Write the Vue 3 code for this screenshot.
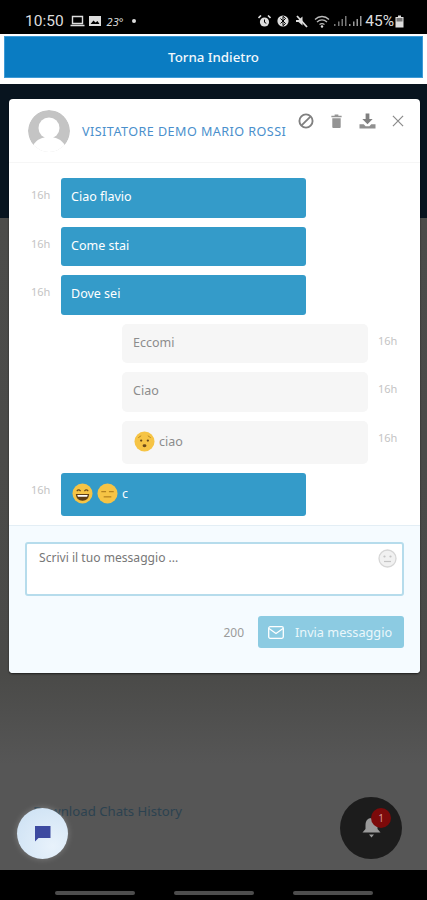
<template>
  <div class="phone">
    <div class="status-bar">
      <div class="status-left">
        <span class="clock">10:50</span>
        <svg width="15" height="12" viewBox="0 0 15 12"><path d="M2.500 1.500h10v7h-10zM0.500 10.500h14" fill="none" stroke="#ddd" stroke-width="1.400"/></svg>
        <svg width="14" height="12" viewBox="0 0 13 12"><path d="M0.500 1h12v10h-12z" fill="#ddd"/><path d="M2 9l3-3.500 2 2 2-1.500 2 3z" fill="#000"/></svg>
        <span class="temp">23°</span>
        <span class="dot"></span>
      </div>
      <div class="status-right">
        <svg width="13" height="13" viewBox="0 0 13 13"><circle cx="6.500" cy="7" r="4.600" fill="#ddd"/><path d="M0.500 3l2.500-2.500M12.500 3L10 0.500" stroke="#ddd" stroke-width="1.600"/><path d="M6.500 4.500v2.800l1.800 1" fill="none" stroke="#000" stroke-width="1"/></svg>
        <svg width="12" height="14" viewBox="0 0 12 14"><circle cx="6" cy="7" r="5.600" fill="#ddd"/><path d="M3.500 4.500l5 5-2.500 2.200v-9.400l2.500 2.200-5 5" fill="none" stroke="#000" stroke-width="1"/></svg>
        <svg width="13" height="13" viewBox="0 0 13 13"><path d="M1 5h2.500l4-3.500v9L3.500 7H1z" fill="#ddd"/><path d="M2 1l10 11" stroke="#ddd" stroke-width="1.800"/></svg>
        <div class="signal-group">
          <svg width="17" height="13" viewBox="0 0 17 13"><path d="M1 4.500c4-4 10-4 14 0M3 7c3-2.700 7-2.700 10 0M5.500 9.500c1.600-1.200 3.400-1.200 5 0" fill="none" stroke="#bbb" stroke-width="1.300"/><circle cx="8" cy="11.500" r="1.200" fill="#ddd"/></svg>
          <svg width="14" height="12" viewBox="0 0 14 12"><path d="M1 9h1.500v2H1zM5 6.500h1.500V11H5zM8.500 4h1.500v7H8.500zM12 1h1.500v10H12z" fill="#777"/></svg>
          <svg width="14" height="12" viewBox="0 0 14 12"><path d="M1 9h1.500v2H1zM5 6.500h1.500V11H5zM8.500 4h1.500v7H8.500zM12 1h1.500v10H12z" fill="#999"/></svg>
        </div>
        <div class="battery-group">
          <span class="battery-text">45%</span>
          <svg width="9" height="13" viewBox="0 0 9 13"><path d="M3 0.500h3v1.500h2.500v10.500h-8V2H3z" fill="#ddd"/><path d="M1.500 3h6v3.500h-6z" fill="#777"/></svg>
        </div>
      </div>
    </div>

    <div class="top-band">
      <button class="back-button">Torna Indietro</button>
    </div>

    <div class="backdrop">
      <div class="modal">
        <div class="modal-header">
          <div class="avatar">
            <svg width="42" height="42" viewBox="0 0 42 42"><circle cx="21" cy="21" r="21" fill="#c4c4c4"/><circle cx="21" cy="18" r="10.500" fill="#fff"/><path d="M5 36c3-7 10-9 16-9s13 2 16 9a21 21 0 0 1-32 0z" fill="#fff"/></svg>
          </div>
          <span class="visitor-name">VISITATORE DEMO MARIO ROSSI</span>
          <div class="header-actions">
            <svg width="16" height="16" viewBox="0 0 17 17"><circle cx="8.500" cy="8.500" r="7" fill="none" stroke="#808080" stroke-width="2"/><path d="M3.800 13.200L13.200 3.800" stroke="#808080" stroke-width="2"/></svg>
            <svg width="13" height="14" viewBox="0 0 13 15"><path d="M1 2h11v1.500H1zM4.500 0.500h4V2h-4zM2 4.500h9V14a1 1 0 0 1-1 1H3a1 1 0 0 1-1-1z" fill="#949494"/></svg>
            <svg width="17" height="16" viewBox="0 0 18 17"><path d="M7 0.500h4v6h3.500L9 12 3.500 6.500H7z" fill="#808080"/><path d="M0.500 12h4.500l2 2h4l2-2h4.500v4.500H0.500z" fill="#909090"/></svg>
            <svg width="12" height="12" viewBox="0 0 13 13"><path d="M1 1l11 11M12 1L1 12" stroke="#8a8a8a" stroke-width="1.300"/></svg>
          </div>
        </div>

        <div class="messages">
          <div v-for="m in messages" :key="m.id" class="row" :class="m.mine ? 'row-mine' : 'row-other'">
            <span class="time">16h</span>
            <div class="bubble" :class="m.mine ? 'bubble-mine' : 'bubble-other'" :style="{ height: m.height + 'px' }">
              <template v-for="e in m.emoji" :key="e">
                <svg class="emoji" width="21" height="21" viewBox="0 0 22 22">
                  <circle cx="11" cy="11" r="10.500" fill="#f6c445"/>
                  <template v-if="e === 'worried'">
                    <circle cx="7.500" cy="10" r="1.200" fill="#6b4a1a"/><circle cx="14.500" cy="10" r="1.200" fill="#6b4a1a"/>
                    <ellipse cx="11" cy="15.500" rx="2" ry="1.500" fill="#6b4a1a"/>
                    <path d="M4.500 7l3-2M17.500 7l-3-2" stroke="#b58320" stroke-width="1"/>
                  </template>
                  <template v-else-if="e === 'grin'">
                    <path d="M5 8.500q2-2.500 4 0M13 8.500q2-2.500 4 0" fill="none" stroke="#6b4a1a" stroke-width="1.200"/>
                    <path d="M4 11.500h14q-.5 7-7 7t-7-7z" fill="#5f3f16"/>
                    <path d="M5.500 12.500h11l-.7 2H6.200z" fill="#fff"/>
                  </template>
                  <template v-else>
                    <path d="M4.500 9h5M12.500 9h5" stroke="#b58320" stroke-width="1.300"/>
                    <path d="M7 14.500h8" stroke="#b58320" stroke-width="1.300"/>
                  </template>
                </svg>
              </template>
              <span>{{ m.text }}</span>
            </div>
          </div>
        </div>

        <div class="composer">
          <div class="input-box">
            <span class="placeholder">Scrivi il tuo messaggio ...</span>
            <svg width="19" height="19" viewBox="0 0 19 19"><circle cx="9.500" cy="9.500" r="8.500" fill="#f1f1f1" stroke="#d6d6d6" stroke-width="1.300"/><circle cx="6.500" cy="7.500" r="1.100" fill="#c4c4c4"/><circle cx="12.500" cy="7.500" r="1.100" fill="#c4c4c4"/><path d="M6 12.500h7" stroke="#c4c4c4" stroke-width="1.200"/></svg>
          </div>
          <div class="send-row">
            <span class="counter">200</span>
            <div class="send-button">
              <svg width="16" height="13" viewBox="0 0 16 13"><rect x="0.700" y="0.700" width="14.600" height="11.600" rx="1.500" fill="none" stroke="#fff" stroke-width="1.300"/><path d="M1 2.500l7 5 7-5" fill="none" stroke="#fff" stroke-width="1.300"/></svg>
              <span>Invia messaggio</span>
            </div>
          </div>
        </div>
      </div>

      <div class="history-link">Download Chats History</div>

      <div class="chat-fab">
        <svg width="17" height="18" viewBox="0 0 17 18"><path d="M1 1h15.500v12H4.500L1 16.500z" fill="#3d4aa0"/></svg>
      </div>
      <div class="bell-fab">
        <svg width="21" height="22" viewBox="0 0 21 22"><path d="M10.500 1c4 0 6 3 6 7v4l3 3.500H1.500l3-3.500V8c0-4 2-7 6-7z" fill="#9a9a9a"/><path d="M8 17.500h5l-2.500 3z" fill="#9a9a9a"/></svg>
        <span class="badge">1</span>
      </div>
    </div>

    <div class="nav-bar">
      <span class="nav-line"></span>
      <span class="nav-line"></span>
      <span class="nav-line"></span>
    </div>
  </div>
</template>

<script setup>
const messages = [
  { id: 1, mine: true, text: 'Ciao flavio', height: 39.5 },
  { id: 2, mine: true, text: 'Come stai', height: 39.5 },
  { id: 3, mine: true, text: 'Dove sei', height: 39.5 },
  { id: 4, mine: false, text: 'Eccomi', height: 39.5 },
  { id: 5, mine: false, text: 'Ciao', height: 39.5 },
  { id: 6, mine: false, text: 'ciao', height: 43, emoji: ['worried'] },
  { id: 7, mine: true, text: 'c', height: 43, emoji: ['grin', 'flat'] }
]
</script>

<style>
html, body {
  margin: 0;
  background: #000;
}
</style>

<style scoped>
.phone {
  width: 427px;
  height: 900px;
  display: flex;
  flex-direction: column;
  overflow: hidden;
  font-family: "Noto Sans", "Open Sans", sans-serif;
}

.status-bar {
  height: 34px;
  flex: none;
  background: #000;
  color: #ddd;
  display: flex;
  justify-content: space-between;
  align-items: center;
  padding: 8px 23px 0 25px;
  box-sizing: border-box;
}

.status-left {
  display: flex;
  align-items: center;
  gap: 3px;
}

.status-right {
  display: flex;
  align-items: center;
  gap: 6px;
}

.signal-group {
  display: flex;
  align-items: center;
  gap: 1.500px;
  margin-right: -3px;
}

.battery-group {
  display: flex;
  align-items: center;
  gap: 1px;
}

.clock,
.battery-text {
  font-family: "Roboto", sans-serif;
  font-size: 15.500px;
}

.clock {
  margin-right: 3px;
}

.temp {
  font-size: 11px;
  font-style: italic;
  margin: 0 6px 0 2px;
}

.dot {
  width: 4px;
  height: 4px;
  border-radius: 50%;
  background: #ddd;
}

.top-band {
  height: 50px;
  flex: none;
  background: #fff;
  padding: 2px 4px 6px;
  box-sizing: border-box;
}

.back-button {
  display: block;
  width: 100%;
  height: 42px;
  border: 1px solid #3e9ad6;
  background: #0a7cc2;
  color: #f2f8fc;
  font-family: inherit;
  font-size: 13.300px;
  font-weight: 500;
  padding: 0;
}

.backdrop {
  flex: 1;
  position: relative;
  background: linear-gradient(#08141f 0, #08141f 134px, #4c4c4a 134px, #4a4a48 590px, #565656 680px);
  padding: 15px 7px 0 9px;
  box-sizing: border-box;
}

.modal {
  background: #fff;
  border-radius: 4px;
  height: 574px;
  display: flex;
  flex-direction: column;
  box-shadow: 0 1px 2px rgba(0, 0, 0, 0.6);
}

.modal-header {
  height: 64px;
  flex: none;
  display: flex;
  align-items: flex-start;
  box-sizing: border-box;
  padding: 11px 16px 0 19px;
  border-bottom: 1px solid #f6f6f6;
}

.avatar {
  width: 42px;
  height: 42px;
  border-radius: 50%;
  overflow: hidden;
  flex: none;
}

.visitor-name {
  margin: 14px 0 0 12px;
  font-size: 12.600px;
  letter-spacing: 0.450px;
  line-height: 16px;
  color: #4a8fcc;
  white-space: nowrap;
  flex: 1;
}

.header-actions {
  display: flex;
  align-items: center;
  gap: 16px;
  margin: 3px 0 0 -20px;
}

.messages {
  flex: 1;
  padding-top: 15px;
  display: flex;
  flex-direction: column;
  gap: 9px;
}

.row {
  display: flex;
  align-items: flex-start;
}

.row-mine {
  padding-left: 22px;
}

.row-other {
  flex-direction: row-reverse;
  justify-content: flex-start;
  padding-right: 24px;
}

.time {
  width: 18px;
  font-size: 11px;
  line-height: 16px;
  margin-top: 9px;
  color: #c4c4c4;
}

.bubble {
  box-sizing: border-box;
  display: flex;
  align-items: center;
  gap: 4px;
  font-size: 12.500px;
  padding-bottom: 2px;
}

.emoji {
  margin-left: 1px;
}

.emoji + .emoji {
  margin-left: 0;
}

.bubble-mine {
  width: 245px;
  margin-left: 12px;
  background: #349bc9;
  color: #fff;
  padding-left: 10px;
  border-radius: 3px;
}

.bubble-other {
  width: 246px;
  margin-right: 10px;
  background: #f6f6f6;
  color: #8c8c8c;
  padding-left: 11px;
  border-radius: 5px;
}

.composer {
  height: 148px;
  flex: none;
  background: #f5fbff;
  border-top: 1px solid #e3eef5;
  box-sizing: border-box;
  padding: 16px 16px 0;
  border-radius: 0 0 4px 4px;
}

.input-box {
  height: 54px;
  box-sizing: border-box;
  border: 2px solid #b6dcec;
  border-radius: 3px;
  background: #fff;
  padding: 5px 5px 0 12px;
  display: flex;
  justify-content: space-between;
  align-items: flex-start;
}

.placeholder {
  font-size: 12.100px;
  line-height: 18px;
  color: #777;
}

.send-row {
  display: flex;
  justify-content: flex-end;
  align-items: center;
  gap: 14px;
  margin-top: 20px;
}

.counter {
  font-size: 12px;
  color: #9b9b9b;
}

.send-button {
  width: 146px;
  height: 32px;
  box-sizing: border-box;
  padding-left: 10px;
  border-radius: 3px;
  background: #8ccbe2;
  color: #eaf7fb;
  font-size: 12.700px;
  display: flex;
  align-items: center;
  gap: 11px;
}

.history-link {
  position: absolute;
  left: 33px;
  top: 718px;
  font-size: 13.200px;
  line-height: 18px;
  color: #2c4250;
}

.chat-fab {
  position: absolute;
  left: 17px;
  top: 724px;
  width: 51px;
  height: 51px;
  border-radius: 50%;
  background: radial-gradient(circle at 70% 75%, #e8f2fb, #cbe0f3);
  box-shadow: 0 0 6px rgba(255, 255, 255, 0.25);
  display: flex;
  align-items: center;
  justify-content: center;
}

.bell-fab {
  position: absolute;
  left: 340px;
  top: 713px;
  width: 62px;
  height: 62px;
  border-radius: 50%;
  background: #1c1c1c;
  display: flex;
  align-items: center;
  justify-content: center;
}

.badge {
  position: absolute;
  left: 31px;
  top: 11px;
  width: 20px;
  height: 20px;
  border-radius: 50%;
  background: #7c0a0a;
  color: #d89a9a;
  font-size: 10px;
  line-height: 20px;
  text-align: center;
}

.nav-bar {
  height: 30px;
  flex: none;
  background: #000;
  display: flex;
  justify-content: center;
  gap: 39px;
  padding-top: 21px;
  box-sizing: border-box;
}

.nav-line {
  width: 80px;
  height: 4px;
  border-radius: 2px;
  background: #4d4d4d;
}
</style>
